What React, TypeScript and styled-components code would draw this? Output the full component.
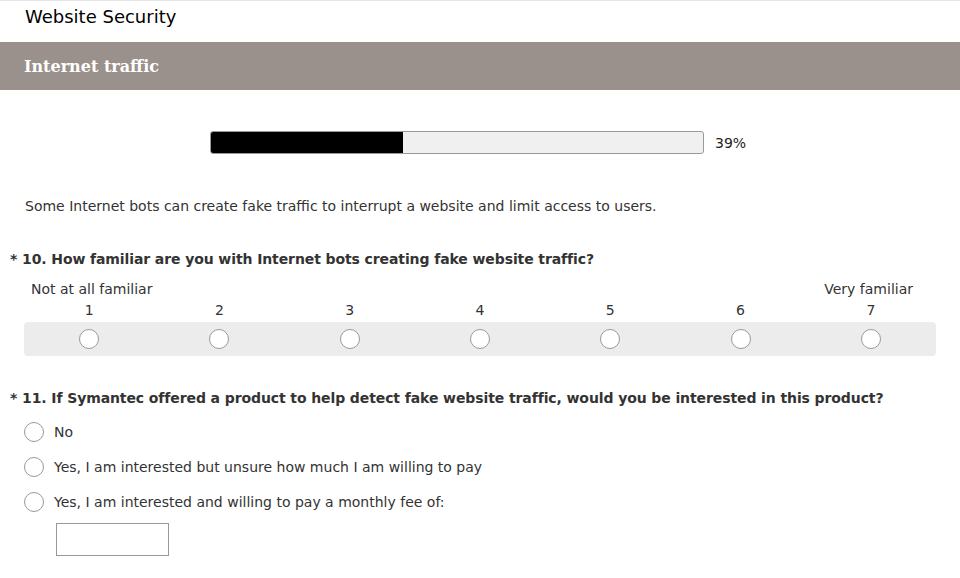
import React from "react";
import styled, { createGlobalStyle } from "styled-components";

const Global = createGlobalStyle`
  html, body { margin: 0; padding: 0; background: #fff; }
  body { font-family: "DejaVu Sans", Verdana, sans-serif; color: #333; }
`;

const Page = styled.div`
  width: 960px;
  border-top: 1px solid #e6e6e6;
`;

const TopBar = styled.div`
  height: 41px;
  box-sizing: border-box;
  display: flex;
  align-items: center;
  padding: 0 0 10px 25px;
  font-size: 18px;
  color: #000;
`;

const Band = styled.div`
  height: 48px;
  background: #9b918c;
  display: flex;
  align-items: center;
  padding-left: 24px;
  font-family: "DejaVu Serif", Georgia, serif;
  font-weight: bold;
  font-size: 16px;
  color: #fff;
`;

const ProgressRow = styled.div`
  display: flex;
  align-items: center;
  padding-left: 210px;
  margin-top: 41px;
  gap: 11px;
  font-size: 14px;
  color: #222;
`;

const Track = styled.div`
  width: 492px;
  height: 21px;
  border: 1px solid #999;
  border-radius: 3px;
  background: #f0f0f0;
  overflow: hidden;
`;

const Fill = styled.div`
  height: 100%;
  background: #000;
`;

const Intro = styled.p`
  margin: 44px 0 0 25px;
  font-size: 14px;
  line-height: 17px;
`;

const Question = styled.h2<{ $top: number }>`
  margin: ${(p) => p.$top}px 0 0 10px;
  font-size: 14px;
  font-weight: bold;
  line-height: 17px;
  letter-spacing: -0.1px;
  color: #333;
`;

const ScaleLabels = styled.div`
  display: flex;
  justify-content: space-between;
  margin: 13px 0 0 31px;
  width: 882px;
  font-size: 14px;
  line-height: 17px;
`;

const ScaleGrid = styled.div`
  display: grid;
  grid-template-columns: repeat(7, 1fr);
  width: 912px;
  margin-left: 24px;
`;

const Num = styled.div`
  text-align: center;
  font-size: 14px;
  line-height: 17px;
  margin-top: 4px;
  padding-bottom: 3px;
`;

const RadioStrip = styled(ScaleGrid)`
  background: #ececec;
  border-radius: 4px;
  height: 34px;
  align-items: center;
  justify-items: center;
`;

const Radio = styled.span`
  display: inline-block;
  width: 18px;
  height: 18px;
  border: 1px solid #999;
  border-radius: 50%;
  background: #fff;
  box-sizing: content-box;
`;

const Options = styled.div`
  margin: 15px 0 0 24px;
  display: flex;
  flex-direction: column;
  gap: 15px;
`;

const Option = styled.label`
  display: flex;
  align-items: center;
  gap: 10px;
  font-size: 14px;
  line-height: 20px;
`;

const FeeInput = styled.div`
  width: 111px;
  height: 31px;
  border: 1px solid #999;
  margin: -4px 0 0 32px;
`;

export default function App() {
  const nums = [1, 2, 3, 4, 5, 6, 7];
  return (
    <Page>
      <Global />
      <TopBar>Website Security</TopBar>
      <Band>Internet traffic</Band>
      <ProgressRow>
        <Track>
          <Fill style={{ width: "39%" }} />
        </Track>
        <span>39%</span>
      </ProgressRow>
      <Intro>Some Internet bots can create fake traffic to interrupt a website and limit access to users.</Intro>
      <Question $top={36}>* 10. How familiar are you with Internet bots creating fake website traffic?</Question>
      <ScaleLabels>
        <span>Not at all familiar</span>
        <span>Very familiar</span>
      </ScaleLabels>
      <ScaleGrid>
        {nums.map((n) => (
          <Num key={n}>{n}</Num>
        ))}
      </ScaleGrid>
      <RadioStrip>
        {nums.map((n) => (
          <Radio key={n} />
        ))}
      </RadioStrip>
      <Question $top={34}>* 11. If Symantec offered a product to help detect fake website traffic, would you be interested in this product?</Question>
      <Options>
        <Option><Radio />No</Option>
        <Option><Radio />Yes, I am interested but unsure how much I am willing to pay</Option>
        <Option><Radio />Yes, I am interested and willing to pay a monthly fee of:</Option>
        <FeeInput />
      </Options>
    </Page>
  );
}
